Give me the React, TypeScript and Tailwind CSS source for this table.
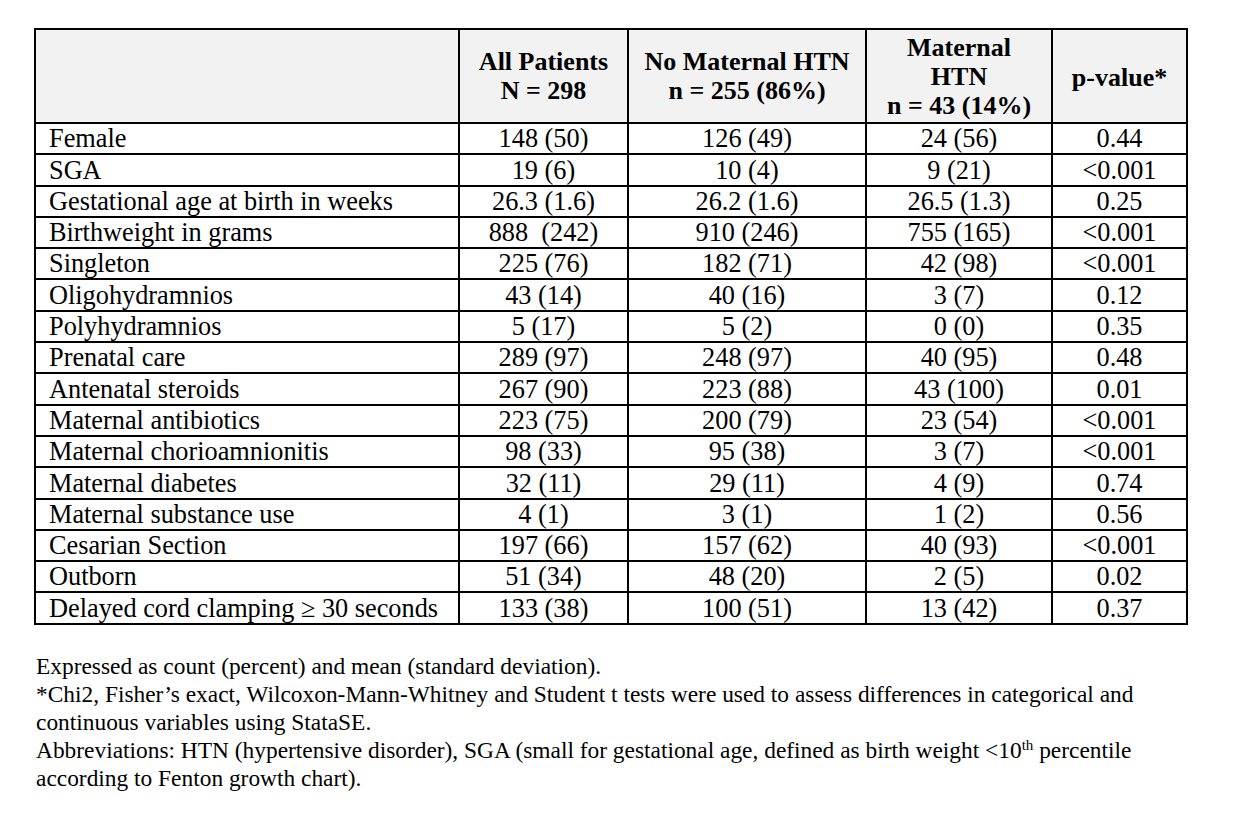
const rows: [string, string, string, string, string][] = [
  ["Female", "148 (50)", "126 (49)", "24 (56)", "0.44"],
  ["SGA", "19 (6)", "10 (4)", "9 (21)", "<0.001"],
  ["Gestational age at birth in weeks", "26.3 (1.6)", "26.2 (1.6)", "26.5 (1.3)", "0.25"],
  ["Birthweight in grams", "888  (242)", "910 (246)", "755 (165)", "<0.001"],
  ["Singleton", "225 (76)", "182 (71)", "42 (98)", "<0.001"],
  ["Oligohydramnios", "43 (14)", "40 (16)", "3 (7)", "0.12"],
  ["Polyhydramnios", "5 (17)", "5 (2)", "0 (0)", "0.35"],
  ["Prenatal care", "289 (97)", "248 (97)", "40 (95)", "0.48"],
  ["Antenatal steroids", "267 (90)", "223 (88)", "43 (100)", "0.01"],
  ["Maternal antibiotics", "223 (75)", "200 (79)", "23 (54)", "<0.001"],
  ["Maternal chorioamnionitis", "98 (33)", "95 (38)", "3 (7)", "<0.001"],
  ["Maternal diabetes", "32 (11)", "29 (11)", "4 (9)", "0.74"],
  ["Maternal substance use", "4 (1)", "3 (1)", "1 (2)", "0.56"],
  ["Cesarian Section", "197 (66)", "157 (62)", "40 (93)", "<0.001"],
  ["Outborn", "51 (34)", "48 (20)", "2 (5)", "0.02"],
  ["Delayed cord clamping \u2265 30 seconds", "133 (38)", "100 (51)", "13 (42)", "0.37"],
];

export default function App() {
  return (
    <div
      className="min-h-screen w-[1234px] bg-white text-black pl-[34px] pt-[28px]"
      style={{ fontFamily: '"Liberation Serif", "Times New Roman", serif' }}
    >
      <table className="table-fixed border-collapse border-2 border-black w-[1154px] text-[26.3px] leading-[29px]">
        <colgroup>
          <col className="w-[424px]" />
          <col className="w-[169px]" />
          <col className="w-[238px]" />
          <col className="w-[186px]" />
          <col className="w-[135px]" />
        </colgroup>
        <thead>
          <tr className="bg-[#f2f2f2] font-bold h-[94px] text-[26px]">
            <th className="border-2 border-black"></th>
            <th className="border-2 border-black text-center align-middle">
              All Patients
              <br />N = 298
            </th>
            <th className="border-2 border-black text-center align-middle">
              No Maternal HTN
              <br />n = 255 (86%)
            </th>
            <th className="border-2 border-black text-center align-bottom pb-[2px]">
              Maternal
              <br />HTN
              <br />n = 43 (14%)
            </th>
            <th className="border-2 border-black text-center align-middle pt-[2px]">p-value*</th>
          </tr>
        </thead>
        <tbody>
          {rows.map((r) => (
            <tr key={r[0]} className="h-[31.3px]">
              <td className="border-2 border-black pl-[13px] align-bottom whitespace-pre">{r[0]}</td>
              <td className="border-2 border-black text-center align-bottom whitespace-pre">{r[1]}</td>
              <td className="border-2 border-black text-center align-bottom">{r[2]}</td>
              <td className="border-2 border-black text-center align-bottom">{r[3]}</td>
              <td className="border-2 border-black text-center align-bottom">{r[4]}</td>
            </tr>
          ))}
        </tbody>
      </table>
      <div className="mt-[27px] pl-[2px] text-[23.4px] leading-[28px] w-[1190px]">
        <p>Expressed as count (percent) and mean (standard deviation).</p>
        <p>
          *Chi2, Fisher’s exact, Wilcoxon-Mann-Whitney and Student t tests were used to assess differences in categorical and
          <br />
          continuous variables using StataSE.
        </p>
        <p>
          Abbreviations: HTN (hypertensive disorder), SGA (small for gestational age, defined as birth weight &lt;10
          <sup className="text-[15px]">th</sup> percentile
          <br />
          according to Fenton growth chart).
        </p>
      </div>
    </div>
  );
}
